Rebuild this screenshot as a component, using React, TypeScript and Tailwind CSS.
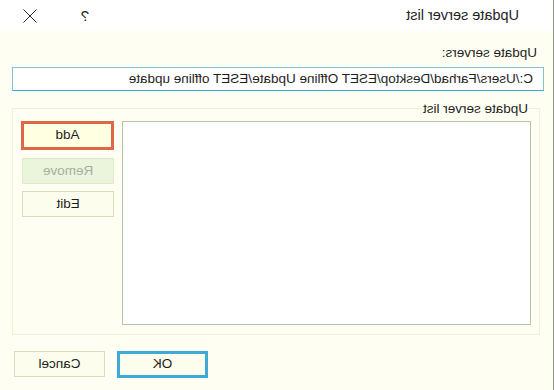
const Btn = ({
  label,
  className,
}: {
  label: string;
  className: string;
}) => (
  <div className={`flex items-center justify-center text-[13.5px] ${className}`}>
    {label}
  </div>
);

export default function App() {
  return (
    <div
      className="w-[554px] h-[390px] overflow-hidden -scale-x-100 flex flex-col border-l border-[#8a9a80] text-[#1e1e1e] bg-[#fefef3]"
      style={{ fontFamily: '"Liberation Sans", Arial, sans-serif' }}
    >
      {/* title bar */}
      <div className="h-[31px] shrink-0 bg-white flex items-center pl-[34px] text-[14.5px]">
        <span>Update server list</span>
        <span className="ml-auto mr-[44px] text-[15px] leading-none">?</span>
        <svg width="14" height="14" viewBox="0 0 14 14" className="mr-[23px]">
          <path d="M0.5 0.5 L13.5 13.5 M13.5 0.5 L0.5 13.5" stroke="#222" strokeWidth="1" fill="none" />
        </svg>
      </div>

      <div className="flex-1 flex flex-col">
        <div className="mt-[14px] ml-[16px] text-[13.5px] leading-[15px]">Update servers:</div>
        <div className="mt-[7px] ml-[9px] w-[532px] h-[24px] bg-white border border-[#80c4d4] border-b-[#3ca8d8] flex items-center pl-[10px] text-[13.5px] whitespace-nowrap">
          C:/Users/Farhad/Desktop/ESET Offline Update/ESET offline update
        </div>

        <fieldset className="mt-[10px] ml-[13px] w-[528px] h-[234px] border border-[#eef2d4] p-0 m-0">
          <legend className="ml-[10px] px-[1px] text-[13.5px] leading-[15px]">Update server list</legend>
          <div className="flex mt-[5px] ml-[8px]">
            <div className="w-[409px] h-[204px] bg-white border border-[#b4c8a4]" />
            <div className="ml-[8px] flex flex-col">
              <Btn label="Add" className="w-[93px] h-[29px] bg-[#ffffe2] border-[3px] border-[#e06648]" />
              <Btn
                label="Remove"
                className="mt-[8px] w-[92px] h-[26px] bg-[#eaf5dc] border border-[#dcebc8] text-[#a6aea2]"
              />
              <Btn label="Edit" className="mt-[7px] w-[92px] h-[26px] bg-[#fcfdec] border border-[#cfe4bc]" />
            </div>
          </div>
        </fieldset>

        <div className="flex mt-[16px] ml-[345px]">
          <Btn label="OK" className="w-[91px] h-[27px] bg-[#fcfdec] border-[3px] border-[#3eaad6]" />
          <Btn label="Cancel" className="ml-[12px] w-[91px] h-[26px] bg-[#fcfdec] border border-[#cfe4bc]" />
        </div>
      </div>
    </div>
  );
}
